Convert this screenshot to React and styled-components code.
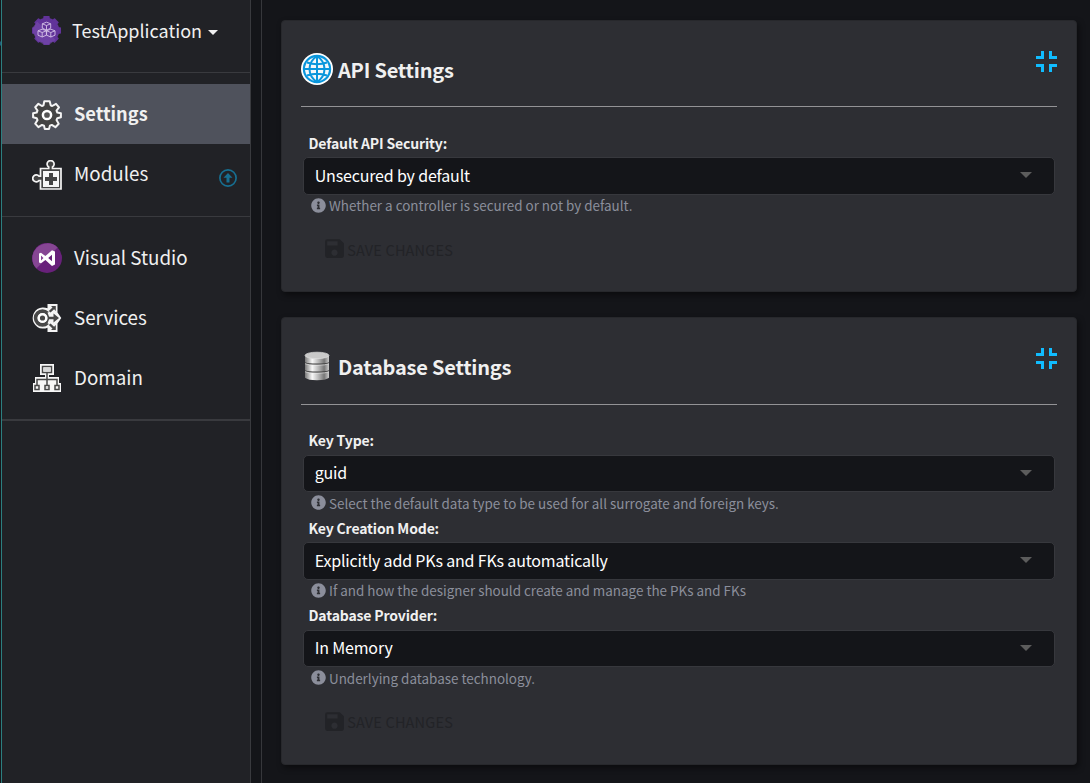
import React from "react";
import styled, { createGlobalStyle } from "styled-components";
import { MdSave } from "react-icons/md";
import { FaInfoCircle } from "react-icons/fa";

const GlobalStyle = createGlobalStyle`
  * { box-sizing: border-box; }
  body {
    margin: 0;
    background: #141519;
    color: #f0f0f0;
    font-family: "Noto Sans CJK SC", "Noto Sans", sans-serif;
    overflow: hidden;
  }
`;

const Page = styled.div`
  display: flex;
  height: 783px;
`;

const Edge = styled.div`
  width: 2px;
  flex: none;
  background: linear-gradient(#15161a 0 41px, #1f5d7c 42px 45px, #15161a 46px);
  border-right: 1px solid #2c7f80;
`;

const Sidebar = styled.nav`
  width: 249px;
  flex: none;
  background: #212226;
  border-right: 1px solid #393a3e;
`;

const Gutter = styled.div`
  width: 11px;
  flex: none;
  border-right: 1px solid #36373b;
`;

const AppMenu = styled.div`
  display: flex;
  align-items: center;
  height: 73px;
  padding: 0 0 11px 30px;
  border-bottom: 1px solid #393a3e;
  svg { flex: none; }
`;

const AppName = styled.span`
  margin: 0 0 1px 11px;
  font-size: 18px;
  line-height: 24px;
`;

const Caret = styled.span`
  margin: 4px 0 0 6px;
  border: 5px solid transparent;
  border-top-color: #f0f0f0;
  border-bottom: 0;
`;

const NavGroup = styled.div`
  padding: 11px 0 ${(p) => (p.$last ? 11 : 12)}px;
  border-bottom: ${(p) => (p.$last ? 2 : 1)}px solid #393a3e;
`;

const NavItem = styled.a`
  display: flex;
  align-items: center;
  height: 60px;
  padding: 0 13px 0 30px;
  background: ${(p) => (p.$active ? "#4f525c" : "transparent")};
  font-size: ${(p) => (p.$active ? 18.2 : 18.8)}px;
  font-weight: ${(p) => (p.$active ? 700 : 400)};
  svg { flex: none; }
`;

const NavIcon = styled.span`
  display: flex;
  padding-top: ${(p) => (p.$low ? 2 : 0)}px;
`;

const NavLabel = styled.span`
  flex: 1;
  margin: 0 0 2px 12px;
  line-height: 24px;
`;

const UpdateBadge = styled.span`
  display: flex;
  padding-top: 8px;
`;

const Content = styled.main`
  flex: 1;
  padding: 20px 13px 0 19px;
`;

const Card = styled.section`
  height: ${(p) => p.$height}px;
  margin-bottom: 25.4px;
  padding: 0 20px;
  background: #2d2e33;
  border: 1px solid #27282c;
  border-radius: 4px;
  box-shadow: 2px 3px 6px rgba(0, 0, 0, 0.45);
`;

const CardHeader = styled.header`
  display: flex;
  align-items: flex-start;
  height: 86.3px;
  margin: 0 -1px;
  border-bottom: 1px solid #939396;
`;

const HeaderIcon = styled.div`
  width: 32px;
  height: 32px;
  margin-top: 32px;
  svg { display: block; }
`;

const Title = styled.h2`
  flex: 1;
  margin: 34px 0 0 5px;
  font-size: 20px;
  font-weight: 700;
  line-height: 30px;
  letter-spacing: -0.22px;
`;

const Compress = styled.svg`
  display: block;
  width: 21px;
  height: 21px;
  margin-top: 30px;
  fill: #10bcff;
`;

const Fields = styled.div`
  padding: 23.6px 1px 0;
`;

const Field = styled.div`
  height: 87.5px;
`;

const Label = styled.label`
  display: block;
  height: 26.3px;
  padding-left: 5.5px;
  font-size: 14px;
  font-weight: 700;
  line-height: 24.5px;
  letter-spacing: -0.15px;
`;

const Select = styled.div`
  display: flex;
  align-items: center;
  justify-content: space-between;
  height: 37.5px;
  padding: 0 22px 2px 10.7px;
  background: #141519;
  border: 1px solid #37383d;
  border-radius: 5px;
  color: #fff;
  font-size: 16px;
  line-height: 24px;
  letter-spacing: -0.17px;
`;

const SelectArrow = styled.span`
  margin-top: 1px;
  border: 6px solid transparent;
  border-top-color: #5c5c5c;
  border-bottom: 0;
`;

const Hint = styled.div`
  display: flex;
  align-items: center;
  gap: 3px;
  height: 21.6px;
  padding-left: 8px;
  color: #8b8e9b;
  font-size: 13.43px;
  line-height: 20px;
`;

const SaveButton = styled.div`
  display: flex;
  align-items: center;
  gap: 0.5px;
  height: 25px;
  margin: 18px 0 0 18.7px;
  color: #222327;
  font-size: 14.5px;
  line-height: 24px;
  letter-spacing: 0.18px;
  span { padding-top: 2px; }
`;

function AppIcon() {
  return (
    <svg width="29" height="29" viewBox="0 0 29 29">
      <g fill="#613399">
        <circle cx="14.5" cy="14.5" r="12.7" />
        {[0, 45, 90, 135].map((angle) => (
          <rect key={angle} x="11.3" width="6.4" height="29" rx="0.8" transform={`rotate(${angle} 14.5 14.5)`} />
        ))}
      </g>
      <path fill="#7a4fae" opacity=".55" d="M5.200 5.800 15 14.500 23.500 24l-6 4.600h-6L5 24.500 1 17v-6z" />
      <g fill="none" stroke="#d6c3e8" strokeWidth="0.900" strokeLinejoin="round">
        <path d="m14.500 6.200 4.200 1.600v4.400l-4.200 2-4.200-2V7.800zM10.300 7.800l4.200 1.700 4.200-1.700M14.500 9.500v4.700" />
        <path d="m10.200 13.200 4.200 1.600v4.400l-4.200 1.800L6 19.200v-4.400zM6 14.800l4.200 1.700 4.200-1.700M10.200 16.500V21" />
        <path d="m18.800 13.200 4.200 1.600v4.400L18.800 21l-4.200-1.800v-4.400zM14.600 14.800l4.200 1.700 4.200-1.700M18.800 16.500V21" />
      </g>
    </svg>
  );
}

function GearIcon() {
  return (
    <svg width="30" height="30" viewBox="0 0 30 30">
      <path fill="#444" stroke="#f4f4f4" strokeWidth="2" strokeLinejoin="round" d="M12.300 1.200h5.400l1 4.100 1.500.7L24 3.800 27 7.400l-2.500 3.200.8 2 3.600.7v4l-3.600.9-.8 1.900 2.200 3.600-3.300 3.500-3.600-2.300-1.900.8-.9 3.300h-4.200l-.8-3.300-2-.8-3.600 2.300-3.200-3.500 2.300-3.600-.8-1.900-3.600-.9v-4l3.600-.8.8-1.900L3.200 7.200l3.200-3.400 3.500 2.200 1.600-.7z" />
      <circle cx="15" cy="15" r="4.100" fill="#555" stroke="#fff" strokeWidth="2.500" />
    </svg>
  );
}

function ModulesIcon() {
  return (
    <svg width="30" height="30" viewBox="0 0 30 30">
      <path fill="#444" stroke="#f4f4f4" strokeWidth="1.700" d="M8.500 8.500h8.200V7a3.500 3.500 0 1 1 3.800 0v1.500H29V29H8.500v-8.500H7a3.500 3.500 0 1 1 0-4.300h1.500z" />
      <path fill="#f7f7f7" d="M11 11h16v16H11z" />
      <path fill="#444" d="M17 13h4v4h4v4h-4v4h-4v-4h-4v-4h4z" />
    </svg>
  );
}

function UpdateIcon() {
  return (
    <svg width="18" height="18" viewBox="0 0 18 18">
      <circle cx="9" cy="9" r="8.100" fill="none" stroke="#176f91" strokeWidth="1.700" />
      <path fill="#176f91" d="m9 4 4.500 4.700h-3V13.500h-3V8.700h-3z" />
    </svg>
  );
}

function VisualStudioIcon() {
  return (
    <svg width="30" height="30" viewBox="0 0 30 30">
      <circle cx="15" cy="15" r="15" fill="#68217a" />
      <path fill="#864693" d="M4.400 25.600A15 15 0 0 1 25.600 4.400z" />
      <path fill="#fff" fillRule="evenodd" d="M20 7.200 23 8.500v13L20 23l-6.600-6.100L9 20.300 7 19.400v-8.800l2-.9 4.400 3.400zM20 11.700 16.200 15l3.800 3.300zM9 12.600v4.800l2.500-2.400z" />
    </svg>
  );
}

function ServicesIcon() {
  return (
    <svg width="30" height="30" viewBox="0 0 30 30">
      <path fill="#f4f4f4" d="M15.500 1h10v8.500l3.800 5.500-3.800 5.500V29h-10v-4.300A10.600 10.600 0 1 1 15.500 5.300z" />
      <circle cx="10.500" cy="15" r="6.900" fill="none" stroke="#484848" strokeWidth="3.600" />
      <circle cx="10.500" cy="15" r="3.700" fill="#484848" stroke="#fff" strokeWidth="2.200" />
      <path fill="#f4f4f4" d="m15.500 9.500 6-1.500v14l-6-1.500 2-5.500z" />
      <path fill="#484848" d="M16.500 13.800h5v-3.300l5.500 4.500-5.500 4.500v-3.300h-5z" />
      <path fill="#484848" d="M19 3h4.800v5l-1.700-1.700-3.600 3.300-1.700-1.700 3.700-3.300zM19 27h4.800v-5l-1.700 1.700-3.600-3.300-1.700 1.700 3.700 3.300z" />
    </svg>
  );
}

function DomainIcon() {
  return (
    <svg width="30" height="30" viewBox="0 0 30 30">
      <path fill="#f7f7f7" d="M8 1h14v11h-5v2h10v6h2v9H1v-9h2v-6h10v-2H8z" />
      <path fill="none" stroke="#484848" strokeWidth="1.500" d="M10.500 3.500h9v6h-9zM15 9.500V22M5 22v-5.500h20V22M3 22.500h4v4H3zM13 22.500h4v4h-4zM23 22.500h4v4h-4z" />
      <path fill="#d8d8d8" d="M11.500 4.500h7v4h-7zM14 23.300h2v2.400h-2z" />
    </svg>
  );
}

function GlobeIcon() {
  return (
    <svg width="32" height="32" viewBox="0 0 32 32">
      <circle cx="16" cy="16" r="16" fill="#fff" />
      <circle cx="16" cy="16" r="14.200" fill="#0a96dc" />
      <circle cx="16" cy="16" r="12" fill="#f5f8fa" />
      <path fill="none" stroke="#0a96dc" strokeWidth="2" d="M16 3v26M3 16h26M6 9.500q10 3.500 20 0M6 22.500q10-3.500 20 0M16 3q-7.500 5-7.500 13T16 29q7.500-5 7.500-13T16 3" />
    </svg>
  );
}

function DatabaseIcon() {
  return (
    <svg width="32" height="32" viewBox="0 0 32 32">
      <defs>
        <linearGradient id="metal">
          <stop offset="0" stopColor="#777" />
          <stop offset=".3" stopColor="#f8f8f8" />
          <stop offset=".55" stopColor="#bbb" />
          <stop offset=".8" stopColor="#777" />
          <stop offset="1" stopColor="#ccc" />
        </linearGradient>
      </defs>
      <g transform="translate(0 0.7)">
        <path fill="url(#metal)" d="M4 5v22q3 2.500 12 2.500T28 27V5z" />
        <ellipse cx="16" cy="4.700" rx="12" ry="3.200" fill="#c9c9c9" stroke="#dedede" strokeWidth=".7" />
        <path fill="none" stroke="#404040" strokeWidth="1.200" d="M4 12q3 1.500 12 1.500T28 12M4 20q3 1.500 12 1.500T28 20" />
        <path fill="none" stroke="#f3f3f3" strokeWidth=".6" d="M4 13q3 1.500 12 1.500T28 13M4 21q3 1.500 12 1.500T28 21" />
      </g>
    </svg>
  );
}

function CompressIcon() {
  return (
    <Compress viewBox="0 0 21 21">
      <path d="M5 0h3v8H0V5h5zM13 0h3v5h5v3h-8zM0 13h8v8H5v-5H0zM13 13h8v3h-5v5h-3z" />
    </Compress>
  );
}

function SettingField({ label, value, hint }) {
  return (
    <Field>
      <Label>{label}</Label>
      <Select>
        <span>{value}</span>
        <SelectArrow />
      </Select>
      <Hint>
        <FaInfoCircle size={15} />
        <span>{hint}</span>
      </Hint>
    </Field>
  );
}

function SettingsCard({ icon, title, height, fields }) {
  return (
    <Card $height={height}>
      <CardHeader>
        <HeaderIcon>{icon}</HeaderIcon>
        <Title>{title}</Title>
        <CompressIcon />
      </CardHeader>
      <Fields>
        {fields.map((f) => (
          <SettingField key={f.label} {...f} />
        ))}
        <SaveButton>
          <MdSave size={25} />
          <span>SAVE CHANGES</span>
        </SaveButton>
      </Fields>
    </Card>
  );
}

const apiFields = [
  { label: "Default API Security:", value: "Unsecured by default", hint: "Whether a controller is secured or not by default." },
];

const databaseFields = [
  { label: "Key Type:", value: "guid", hint: "Select the default data type to be used for all surrogate and foreign keys." },
  { label: "Key Creation Mode:", value: "Explicitly add PKs and FKs automatically", hint: "If and how the designer should create and manage the PKs and FKs" },
  { label: "Database Provider:", value: "In Memory", hint: "Underlying database technology." },
];

export default function App() {
  return (
    <Page>
      <GlobalStyle />
      <Edge />
      <Sidebar>
        <AppMenu>
          <AppIcon />
          <AppName>TestApplication</AppName>
          <Caret />
        </AppMenu>
        <NavGroup>
          <NavItem $active>
            <NavIcon $low><GearIcon /></NavIcon>
            <NavLabel>Settings</NavLabel>
          </NavItem>
          <NavItem>
            <NavIcon $low><ModulesIcon /></NavIcon>
            <NavLabel>Modules</NavLabel>
            <UpdateBadge><UpdateIcon /></UpdateBadge>
          </NavItem>
        </NavGroup>
        <NavGroup $last>
          <NavItem>
            <NavIcon><VisualStudioIcon /></NavIcon>
            <NavLabel>Visual Studio</NavLabel>
          </NavItem>
          <NavItem>
            <NavIcon><ServicesIcon /></NavIcon>
            <NavLabel>Services</NavLabel>
          </NavItem>
          <NavItem>
            <NavIcon><DomainIcon /></NavIcon>
            <NavLabel>Domain</NavLabel>
          </NavItem>
        </NavGroup>
      </Sidebar>
      <Gutter />
      <Content>
        <SettingsCard icon={<GlobeIcon />} title="API Settings" height={272} fields={apiFields} />
        <SettingsCard icon={<DatabaseIcon />} title="Database Settings" height={448} fields={databaseFields} />
      </Content>
    </Page>
  );
}
